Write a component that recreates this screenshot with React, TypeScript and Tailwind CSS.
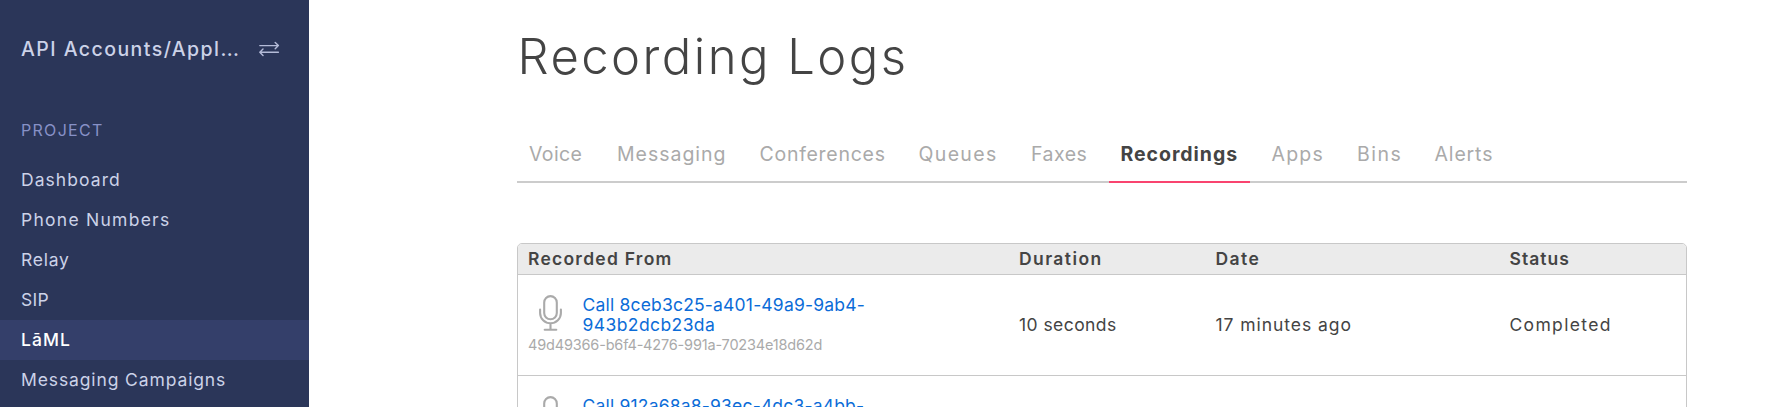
const projectLinks = [
  { label: 'Dashboard', tracking: 'tracking-[1.06px]' },
  { label: 'Phone Numbers', tracking: 'tracking-[1.26px]' },
  { label: 'Relay', tracking: 'tracking-[0.75px]' },
  { label: 'SIP', tracking: 'tracking-[0.29px]' },
  { label: 'LāML', tracking: 'tracking-[1.07px]', active: true },
  { label: 'Messaging Campaigns', tracking: 'tracking-[0.88px]' },
];

const tabs = [
  { label: 'Voice', size: 'w-[78px] tracking-[0.4px]' },
  { label: 'Messaging', size: 'w-[132.5px] tracking-[0.98px]' },
  { label: 'Conferences', size: 'w-[149px] tracking-[0.73px]' },
  { label: 'Queues', size: 'w-[102.5px] tracking-[1.35px]' },
  { label: 'Faxes', size: 'w-[79.5px] tracking-[0.5px]' },
  { label: 'Recordings', size: 'w-[141px] tracking-[0.95px]', active: true },
  { label: 'Apps', size: 'w-[75.5px] tracking-[1.2px]' },
  { label: 'Bins', size: 'w-[67.5px] tracking-[1.5px]' },
  { label: 'Alerts', size: 'w-[80px] tracking-[0.85px]' },
];

const recordings = [
  {
    call: ['Call 8ceb3c25-a401-49a9-9ab4-', '943b2dcb23da'],
    id: '49d49366-b6f4-4276-991a-70234e18d62d',
    duration: '10 seconds',
    date: '17 minutes ago',
    status: 'Completed',
  },
  { call: ['Call 912a68a8-93ec-4dc3-a4bb-'] },
];

const columns = 'grid grid-cols-[491px_196.5px_294px_1fr] items-center pl-[10px]';

function SwapIcon() {
  return (
    <svg className="h-[16px] w-[22px] shrink-0" viewBox="0 0 22 16" fill="none" stroke="#b4bbd8" strokeWidth="1.4" strokeLinecap="round" strokeLinejoin="round">
      <path d="M0.8 4.6H19.4M16.2 1.4L19.4 4.6L16.2 7.8M19.4 11.2H0.8M4 8L0.8 11.2L4 14.4" />
    </svg>
  );
}

function MicIcon() {
  return (
    <svg className="ml-[10.5px] h-[36px] w-[23px] shrink-0" viewBox="0 0 23 36" fill="none" stroke="#aaaaaa" strokeWidth="2.1" strokeLinecap="round">
      <rect x="5.2" y="1.1" width="12.6" height="23.2" rx="6.3" />
      <path d="M1.1 14.5V18A10.4 10.2 0 0 0 21.9 18V14.5M11.5 28.5V34.8M5.7 34.8H17.3" />
    </svg>
  );
}

export default function App() {
  return (
    <div className="flex h-[407px] overflow-hidden bg-white font-[Inter,sans-serif] text-[17.5px] text-[#444444]">
      <aside className="w-[309px] shrink-0 bg-[#2b3659] text-[#ccd2e8]">
        <div className="flex h-[98px] items-center pl-[21px]">
          <span className="w-[238px] whitespace-nowrap pt-[2px] text-[19.5px] font-medium tracking-[1.45px]">
            API Accounts/Appl<span className="tracking-[0.3px]">...</span>
          </span>
          <SwapIcon />
        </div>
        <h2 className="h-[62px] pl-[21px] pt-[20px] text-[16px] leading-[24px] tracking-[1.3px] text-[#8791c7]">PROJECT</h2>
        <nav>
          {projectLinks.map((link) => (
            <a
              key={link.label}
              className={`flex h-10 items-center pl-[21px] ${link.tracking} ${link.active ? 'bg-[#343f6a] font-medium text-white' : ''}`}
            >
              {link.label}
            </a>
          ))}
        </nav>
      </aside>

      <main className="ml-[208px] w-[1170px]">
        <h1 className="h-[127px] pl-[0.5px] pt-[27px] text-[49px] leading-[60px] font-light tracking-[2.46px]">Recording Logs</h1>
        <div className="flex h-[56px] gap-[10px] border-b-2 border-[#cccccc]">
          {tabs.map((tab) => (
            <a
              key={tab.label}
              className={`h-[56px] border-b-2 pl-[12px] text-[19.5px] leading-[54px] ${tab.size} ${
                tab.active ? 'border-[#f9446f] font-bold' : 'border-transparent text-[#aaaaaa]'
              }`}
            >
              {tab.label}
            </a>
          ))}
        </div>

        <section className="mt-[60px] h-[200px] rounded-t-[5px] border border-[#c8c8c8]">
          <div className={`${columns} h-[31px] rounded-t-[4px] border-b border-[#c8c8c8] bg-[#ebebeb] font-semibold`}>
            <span className="tracking-[1.24px]">Recorded From</span>
            <span className="tracking-[1.41px]">Duration</span>
            <span className="tracking-[1.43px]">Date</span>
            <span className="tracking-[1.02px]">Status</span>
          </div>
          {recordings.map((rec) => (
            <div key={rec.call[0]} className={`${columns} h-[101px] border-b border-[#c8c8c8]`}>
              <div className="h-[60px]">
                <div className="flex h-10">
                  <MicIcon />
                  <a className="ml-[21px] whitespace-nowrap leading-5 text-[#0b6cd8]">
                    <span className="block tracking-[0.19px]">{rec.call[0]}</span>
                    <span className="block tracking-[0.41px]">{rec.call[1]}</span>
                  </a>
                </div>
                <p className="text-[14.5px] leading-5 tracking-[-0.175px] text-[#aaaaaa]">{rec.id}</p>
              </div>
              <span className="tracking-[0.44px]">{rec.duration}</span>
              <span className="tracking-[0.95px]">{rec.date}</span>
              <span className="tracking-[1.33px]">{rec.status}</span>
            </div>
          ))}
        </section>
      </main>
    </div>
  );
}
